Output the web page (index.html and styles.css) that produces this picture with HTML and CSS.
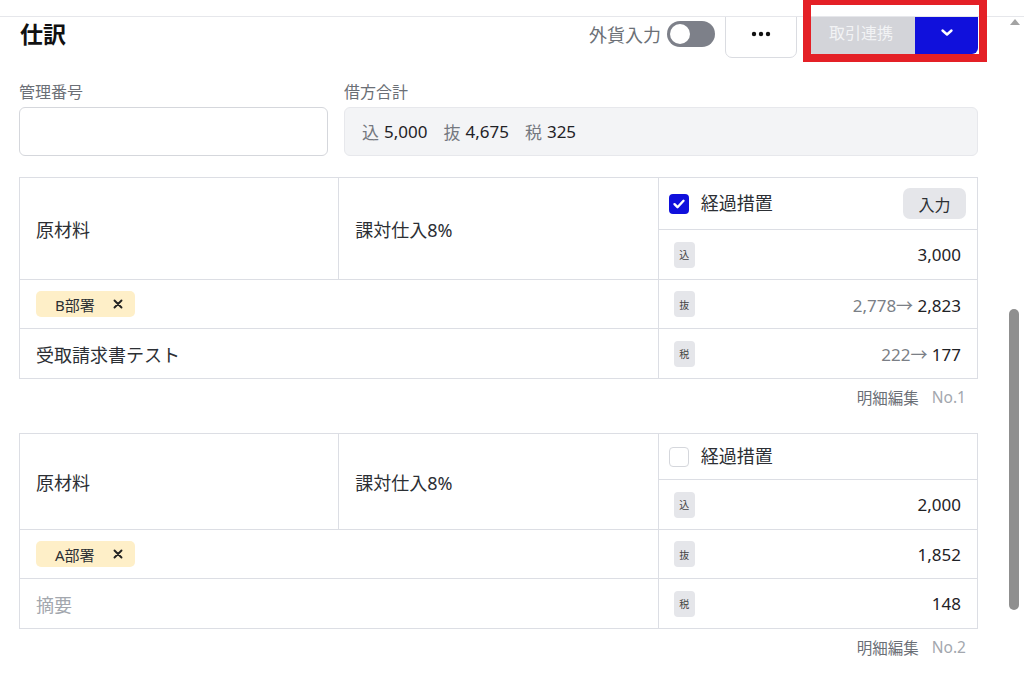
FILE: index.html
```html
<!DOCTYPE html>
<html lang="ja">
<head>
    <meta charset="UTF-8">
    <meta name="viewport" content="width=device-width, initial-scale=1.0">
    <title>仕訳</title>
    <link rel="stylesheet" href="styles.css">
</head>
<body>

<div class="top-edge"></div>
<div class="highlight"></div>
<div class="scrollbar">
    <span class="scroll-up"></span>
    <span class="scroll-thumb"></span>
</div>

<main class="page">
    <header class="toolbar">
        <h1>仕訳</h1>
        <div class="tools">
            <span class="fx-label">外貨入力</span>
            <span class="switch"><span class="knob"></span></span>
            <button class="more" type="button">
                <svg width="22" height="6" viewBox="0 0 22 6"><circle cx="4" cy="3" r="2.2"/><circle cx="11" cy="3" r="2.2"/><circle cx="18" cy="3" r="2.2"/></svg>
            </button>
            <div class="split">
                <button class="split-main" type="button">取引連携</button>
                <button class="split-caret" type="button">
                    <svg width="14" height="9" viewBox="0 0 14 9"><path d="M2.5 2.5l4.5 4 4.5-4" fill="none" stroke="#fff" stroke-width="2.4" stroke-linecap="round" stroke-linejoin="round"/></svg>
                </button>
            </div>
        </div>
    </header>

    <div class="summary">
        <div class="field">
            <div class="label">管理番号</div>
            <div class="input-box"></div>
        </div>
        <div class="field">
            <div class="label">借方合計</div>
            <div class="total-box">
                <span class="k">込</span><span class="v">5,000</span>
                <span class="k">抜</span><span class="v">4,675</span>
                <span class="k">税</span><span class="v">325</span>
            </div>
        </div>
    </div>

    <!-- 明細 1 -->
    <section class="entry">
        <div class="cell cell-name">原材料</div>
        <div class="cell cell-taxtype">課対仕入8%</div>
        <div class="cell cell-keika">
            <span class="check checked">
                <svg width="20" height="20" viewBox="0 0 20 20"><path d="M5.5 10.2l3 3 6-6.4" fill="none" stroke="#fff" stroke-width="2.4" stroke-linecap="round" stroke-linejoin="round"/></svg>
            </span>
            <span class="keika-text">経過措置</span>
            <button class="small-btn" type="button">入力</button>
        </div>
        <div class="cell cell-amt row-2">
            <span class="badge">込</span>
            <span class="amt">3,000</span>
        </div>
        <div class="cell cell-dept">
            <span class="chip">B部署
                <svg width="10" height="10" viewBox="0 0 10 10"><path d="M1.5 1.5l7 7M8.5 1.5l-7 7" stroke="#222" stroke-width="1.9" stroke-linecap="round"/></svg>
            </span>
        </div>
        <div class="cell cell-amt row-3">
            <span class="badge">抜</span>
            <span class="amt"><span class="old">2,778→</span> 2,823</span>
        </div>
        <div class="cell cell-memo">受取請求書テスト</div>
        <div class="cell cell-amt row-4">
            <span class="badge">税</span>
            <span class="amt"><span class="old">222→</span> 177</span>
        </div>
    </section>
    <div class="entry-foot">明細編集<span class="no">No.1</span></div>

    <!-- 明細 2 -->
    <section class="entry">
        <div class="cell cell-name">原材料</div>
        <div class="cell cell-taxtype">課対仕入8%</div>
        <div class="cell cell-keika">
            <span class="check"></span>
            <span class="keika-text">経過措置</span>
        </div>
        <div class="cell cell-amt row-2">
            <span class="badge">込</span>
            <span class="amt">2,000</span>
        </div>
        <div class="cell cell-dept">
            <span class="chip">A部署
                <svg width="10" height="10" viewBox="0 0 10 10"><path d="M1.5 1.5l7 7M8.5 1.5l-7 7" stroke="#222" stroke-width="1.9" stroke-linecap="round"/></svg>
            </span>
        </div>
        <div class="cell cell-amt row-3">
            <span class="badge">抜</span>
            <span class="amt">1,852</span>
        </div>
        <div class="cell cell-memo placeholder">摘要</div>
        <div class="cell cell-amt row-4">
            <span class="badge">税</span>
            <span class="amt">148</span>
        </div>
    </section>
    <div class="entry-foot">明細編集<span class="no">No.2</span></div>
</main>

</body>
</html>
```

FILE: styles.css
```css
body {
    margin: 0;
    background: #fff;
    color: #2c2f34;
    font-family: "Noto Sans", "Noto Sans CJK JP", sans-serif;
    overflow: hidden;
}
button {
    font-family: inherit;
    border: none;
    padding: 0;
    cursor: pointer;
}

/* 上端の固定ライン */
.top-edge {
    position: absolute;
    top: 0;
    left: 0;
    width: 100%;
    height: 16px;
    background: #fff;
    border-bottom: 1px solid #e6e7eb;
    z-index: 10;
}
.highlight {
    position: absolute;
    left: 803px;
    top: -3px;
    width: 168px;
    height: 49px;
    border: 8px solid #e42026;
    z-index: 20;
}
.scrollbar {
    position: absolute;
    top: 17px;
    right: 0;
    width: 16px;
    height: 667px;
    z-index: 11;
}
.scroll-up {
    position: absolute;
    top: 2px;
    left: 2px;
    width: 0;
    height: 0;
    border-left: 5px solid transparent;
    border-right: 5px solid transparent;
    border-bottom: 6px solid #a3a3a3;
}
.scroll-thumb {
    position: absolute;
    top: 292px;
    left: 1px;
    width: 10px;
    height: 301px;
    background: #8f8f8f;
    border-radius: 5px;
}

.page {
    width: 959px;
    margin-left: 19px;
}

.toolbar {
    display: flex;
    justify-content: space-between;
    align-items: center;
    height: 48px;
    margin-top: 10px;
}
.toolbar h1 {
    margin: 0 0 0 1px;
    font-size: 23px;
    font-weight: 700;
    color: #111;
    line-height: 1;
}
.tools {
    display: flex;
    align-items: center;
    height: 48px;
}
.fx-label {
    font-size: 18px;
    color: #6b6f76;
}
.switch {
    position: relative;
    width: 48px;
    height: 26px;
    margin-left: 6px;
    background: #7d8089;
    border-radius: 13px;
}
.switch .knob {
    position: absolute;
    top: 3px;
    left: 3px;
    width: 20px;
    height: 20px;
    border-radius: 50%;
    background: #fff;
}
.more {
    width: 72px;
    height: 48px;
    margin-left: 10px;
    background: #fff;
    border: 1px solid #dadce1;
    border-radius: 7px;
    display: flex;
    align-items: center;
    justify-content: center;
}
.more svg {
    fill: #111;
}
.split {
    display: flex;
    align-self: flex-start;
    height: 44px;
    margin-left: 10px;
}
.split-main {
    width: 108px;
    background: #d3d4d9;
    color: #f2f3f5;
    font-size: 16px;
    border-radius: 6px 0 0 6px;
}
.split-caret {
    width: 63px;
    background: #1010dc;
    border-radius: 0 6px 6px 0;
    display: flex;
    align-items: center;
    justify-content: center;
}

.summary {
    display: grid;
    grid-template-columns: 309px 1fr;
    column-gap: 16px;
    margin-top: 24px;
}
.label {
    font-size: 16px;
    line-height: 20px;
    color: #6b6f76;
    margin-bottom: 5px;
}
.input-box {
    height: 47px;
    border: 1px solid #d5d7dc;
    border-radius: 6px;
    background: #fff;
}
.total-box {
    height: 47px;
    display: flex;
    align-items: center;
    padding: 0 17px;
    background: #f3f4f6;
    border: 1px solid #e7e8ec;
    border-radius: 6px;
    font-size: 17px;
}
.total-box .k {
    color: #74787f;
    margin-right: 5px;
}
.total-box .v {
    color: #1f2226;
    margin-right: 16px;
}

/* 明細テーブル */
.entry {
    display: grid;
    grid-template-columns: 1fr 1fr 1fr;
    grid-template-rows: auto 49px 48px 49px;
    gap: 1px;
    background: #dcdee4;
    border: 1px solid #dcdee4;
    margin-top: 21px;
}
.entry + .entry-foot + .entry {
    margin-top: 0;
}
.cell {
    background: #fff;
    display: flex;
    align-items: center;
    font-size: 18px;
}
.cell-name {
    grid-column: 1;
    grid-row: 1 / 3;
    padding-left: 16px;
}
.cell-taxtype {
    grid-column: 2;
    grid-row: 1 / 3;
    padding-left: 16px;
}
.cell-keika {
    grid-column: 3;
    grid-row: 1;
    padding: 10px 11px 10px 10px;
    min-height: 25px;
}
.cell-dept {
    grid-column: 1 / 3;
    grid-row: 3;
    padding-left: 16px;
}
.cell-memo {
    grid-column: 1 / 3;
    grid-row: 4;
    padding-left: 16px;
}
.cell-memo.placeholder {
    color: #a3a7ae;
}
.cell-amt {
    grid-column: 3;
    justify-content: space-between;
    padding: 0 16px 0 15px;
}
.row-2 { grid-row: 2; }
.row-3 { grid-row: 3; }
.row-4 { grid-row: 4; }

.check {
    width: 18px;
    height: 18px;
    border: 1px solid #d5d7dc;
    border-radius: 4px;
    background: #fff;
    display: flex;
}
.check.checked {
    width: 20px;
    height: 20px;
    border: none;
    background: #1010dc;
}
.keika-text {
    margin-left: 12px;
    flex: 1;
    line-height: 25px;
    color: #2c2f34;
}
.small-btn {
    width: 63px;
    height: 31px;
    background: #e5e6ea;
    border-radius: 7px;
    font-size: 16px;
    color: #2c2f34;
}

.badge {
    width: 21px;
    height: 26px;
    border-radius: 4px;
    background: #e5e6ea;
    font-size: 10px;
    color: #444;
    display: flex;
    align-items: center;
    justify-content: center;
}
.amt {
    font-size: 17px;
    color: #1f2226;
}
.amt .old {
    color: #7b7f86;
}

.chip {
    display: inline-flex;
    align-items: center;
    height: 26px;
    padding: 0 12px 0 19px;
    background: #feefc8;
    border-radius: 5px;
    font-size: 15px;
    color: #2c2f34;
}
.chip svg {
    margin-left: 18px;
}

.entry-foot {
    display: flex;
    justify-content: flex-end;
    align-items: center;
    height: 22px;
    margin: 7px 0 25px;
    padding-right: 12px;
    font-size: 15.5px;
    color: #6b6f76;
}
.entry-foot .no {
    margin-left: 13px;
    color: #a3a7ae;
}
```
